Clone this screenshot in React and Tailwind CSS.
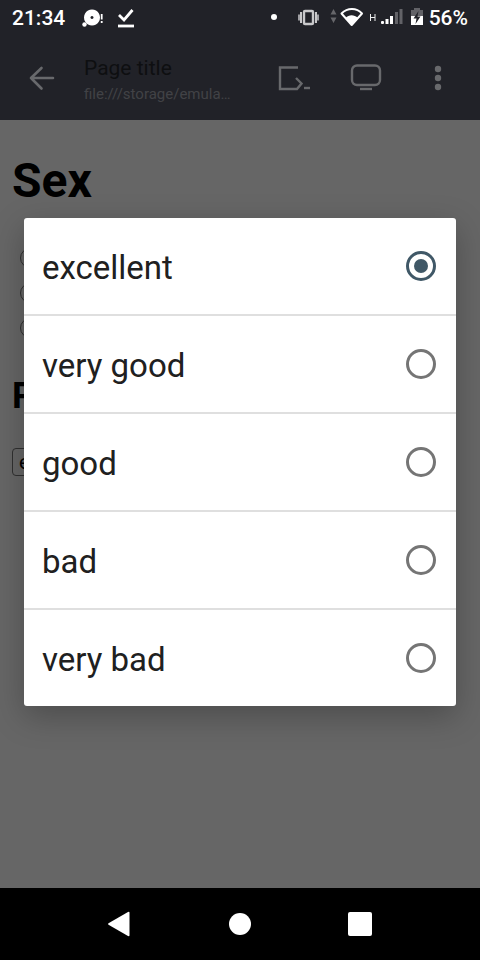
import { useState } from "react";

const options = ["excellent", "very good", "good", "bad", "very bad"];

function StatusBar() {
  return (
    <header className="flex h-9 items-center bg-[#212228] px-3 text-[21px] leading-7 font-medium text-white">
      <span>21:34</span>
      <svg className="ml-4 shrink-0" width="24" height="20" viewBox="0 0 24 20" fill="#fff" aria-hidden="true">
        <path fillRule="evenodd" d="M11 1.500a8 8 0 1 0 .01 0zM11 8a1.500 1.500 0 1 1-.01 0z" />
        <circle cx="3.500" cy="16.500" r="2.200" />
        <path d="M19.800 6h1.800v5.500h-1.800zM19.800 13h1.800v2h-1.800z" />
      </svg>
      <svg className="ml-3 shrink-0" width="18" height="20" viewBox="0 0 18 20" fill="none" stroke="#fff" aria-hidden="true">
        <path d="M2 7l5 5L15.500 2" strokeWidth="2.800" />
        <path d="M1 18h16" strokeWidth="2.800" />
      </svg>
      <div className="ml-auto flex items-center">
        <svg className="shrink-0" width="158" height="24" viewBox="0 0 158 24" aria-hidden="true">
          <circle cx="3" cy="11" r="3" fill="#fff" />
          <g fill="none" stroke="#c9c9cb">
            <rect x="33" y="5" width="9" height="13" rx="1" strokeWidth="2.400" />
            <path d="M30 6v11M45 6v11" strokeWidth="2" />
            <path d="M28 8.500v6M47 8.500v6" strokeWidth="1.500" />
          </g>
          <path d="M59.500 8.500l3-5.500 3 5.500zM59.500 11.500l3 5.500 3-5.500z" fill="#66666a" />
          <path d="M70.500 7.500c6-6 15-6 20.500 0L80.700 19z" fill="none" stroke="#fff" strokeWidth="2" strokeLinejoin="round" />
          <path d="M74.500 12c3.500-3.800 8.500-3.800 12.500 0L80.700 19z" fill="#fff" />
          <path d="M99.500 8v7M104 8v7M99.500 11.500h4.500" fill="none" stroke="#eee" strokeWidth="1" />
          <g fill="#fff">
            <rect x="110" y="15" width="3" height="3" rx="1" />
            <rect x="114.500" y="13" width="3" height="5" />
            <rect x="119" y="10" width="3" height="8" />
          </g>
          <path d="M124 6h3v12h-3zM128.500 3h3v15h-3z" fill="#626267" />
          <path d="M140 4h3V2h6v2h3v15h-12z" fill="#626267" />
          <path d="M140 10h12v9h-12z" fill="#fff" />
          <path d="M147.500 5l-5 7.500h3L144.500 18l5-7.500h-3z" fill="#212228" />
        </svg>
        <span>56%</span>
      </div>
    </header>
  );
}

function Toolbar() {
  return (
    <div className="flex h-[84px] items-center bg-[#212228] pr-6 pl-6 text-[#68696c]">
      <button type="button" aria-label="Back" className="flex size-9 items-center justify-center">
        <svg width="28" height="28" viewBox="0 0 28 28" fill="none" stroke="currentColor" strokeWidth="2.600" strokeLinecap="round" strokeLinejoin="round">
          <path d="M25 14H3M13.500 4L3 14l10.500 10.500" />
        </svg>
      </button>
      <div className="ml-6 w-[148px] pt-1">
        <div className="truncate text-[21px] leading-7 text-[#0e0f11]">Page title</div>
        <div className="text-[15px] leading-6 whitespace-nowrap text-[#414246]">file:///storage/emula…</div>
      </div>
      <div className="ml-auto flex items-center">
        <button type="button" aria-label="Run page" className="flex w-9 items-center justify-center">
          <svg width="34" height="28" viewBox="0 0 34 28" fill="none" stroke="currentColor" strokeWidth="2.400">
            <path d="M21 3.500H3V25h17l4.500-5.500-5.500-5.500" />
            <path d="M27 24h6" />
          </svg>
        </button>
        <button type="button" aria-label="Desktop view" className="ml-9 flex w-9 items-center justify-center">
          <svg width="32" height="28" viewBox="0 0 32 28" fill="none" stroke="currentColor" strokeWidth="2.400">
            <rect x="2" y="1.500" width="28" height="19.500" rx="5" />
            <path d="M10 25h12" />
          </svg>
        </button>
        <button type="button" aria-label="More options" className="ml-9 flex w-9 items-center justify-center">
          <svg width="8" height="26" viewBox="0 0 8 26" fill="currentColor">
            <circle cx="4" cy="4" r="3.200" />
            <circle cx="4" cy="13" r="3.200" />
            <circle cx="4" cy="22" r="3.200" />
          </svg>
        </button>
      </div>
    </div>
  );
}

function Page({ value }) {
  return (
    <main className="flex-1 bg-[#666666] px-3 pt-[33px] text-black">
      <h1 className="text-5xl leading-[56px] font-bold">Sex</h1>
      <div className="mt-[39px] flex flex-col gap-[15px] pl-2">
        {["First", "Second", "Third"].map((name) => (
          <input
            key={name}
            type="radio"
            name="sex"
            aria-label={name}
            className="size-5 appearance-none rounded-full border border-[#303030]"
          />
        ))}
      </div>
      <h2 className="mt-9 text-4xl leading-[44px] font-bold">P</h2>
      <select
        value={value}
        disabled
        aria-label="Condition"
        className="mt-[30px] block h-7 w-28 appearance-none rounded-sm border border-[#303030] px-1.5 text-xl leading-6 text-black opacity-100"
      >
        {options.map((option) => (
          <option key={option}>{option}</option>
        ))}
      </select>
    </main>
  );
}

function ChoiceDialog({ value, onChange }) {
  return (
    <div className="absolute inset-0 flex items-center justify-center px-6">
      <div role="dialog" aria-label="Choose an option" className="w-full divide-y-2 divide-[#dfdfdf] rounded-[3px] bg-white shadow-[0_10px_32px_rgba(0,0,0,0.26)]">
        {options.map((option) => (
          <label key={option} className="flex h-[98px] items-center justify-between pr-5 pl-[18px] text-[33px] leading-10 text-[#202020] last:h-24">
            <span className="pt-1">{option}</span>
            <input
              type="radio"
              name="choice"
              checked={value === option}
              onChange={() => onChange(option)}
              className="flex size-[30px] appearance-none items-center justify-center rounded-full border-3 border-[#757575] before:size-[14px] before:rounded-full checked:border-[#405867] checked:before:bg-[#405867]"
            />
          </label>
        ))}
      </div>
    </div>
  );
}

function NavigationBar() {
  return (
    <nav className="flex h-[72px] items-center justify-center gap-[84px] bg-black text-white">
      <button type="button" aria-label="Back" className="flex w-9 justify-center">
        <svg width="26" height="26" viewBox="0 0 26 26" fill="currentColor"><path d="M1.500 12.300Q.5 13 1.500 13.700L21 25q1.500.5 1.500-.8V1.800Q22.500.5 21 1z" /></svg>
      </button>
      <button type="button" aria-label="Home" className="flex w-9 justify-center">
        <span className="size-[22px] rounded-full bg-white" />
      </button>
      <button type="button" aria-label="Recent apps" className="flex w-9 justify-center">
        <span className="size-6 rounded-xs bg-white" />
      </button>
    </nav>
  );
}

export default function App() {
  const [value, setValue] = useState("excellent");
  return (
    <div className="flex min-h-screen flex-col font-['Roboto',sans-serif]">
      <StatusBar />
      <div className="relative flex flex-1 flex-col">
        <Toolbar />
        <Page value={value} />
        <ChoiceDialog value={value} onChange={setValue} />
      </div>
      <NavigationBar />
    </div>
  );
}
